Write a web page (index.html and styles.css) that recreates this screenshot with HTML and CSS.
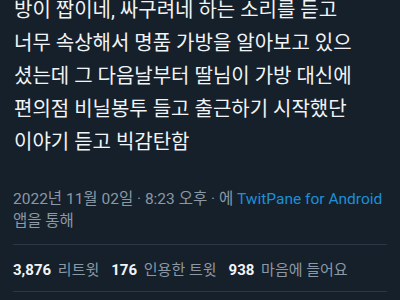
FILE: index.html
```html
<!DOCTYPE html>
<html lang="ko">
<head>
<meta charset="utf-8">
<link rel="stylesheet" href="styles.css">
</head>
<body>
<main class="tweet">
  <p class="text">방이 짭이네, 싸구려네 하는 소리를 듣고<br>너무 속상해서 명품 가방을 알아보고 있으<br>셨는데 그 다음날부터 딸님이 가방 대신에<br>편의점 비닐봉투 들고 출근하기 시작했단<br>이야기 듣고 빅감탄함</p>
  <p class="meta">2022년 11월 02일 · 8:23 오후 · 에 <span class="link">TwitPane for Android</span><br>앱을 통해</p>
  <div class="stats">
    <span class="stat"><b>3,876</b> 리트윗</span>
    <span class="stat"><b>176</b> 인용한 트윗</span>
    <span class="stat"><b>938</b> 마음에 들어요</span>
  </div>
</main>
</body>
</html>
```
FILE: styles.css
```css
html, body {
  margin: 0;
  padding: 0;
  background: #15202b;
  overflow: hidden;
}
body {
  font-family: Roboto, "Noto Sans CJK KR", sans-serif;
  width: 400px;
  height: 300px;
}
.tweet {
  padding: 0 13px 0 14px;
}
.text {
  margin: -6px 0 0 0;
  font-size: 20px;
  line-height: 33px;
  color: #f1f4f6;
  white-space: nowrap;
}
.meta {
  margin: 29px 0 0 -1px;
  font-size: 15.5px;
  line-height: 22px;
  color: #8b98a5;
  white-space: nowrap;
}
.link {
  color: #1d8fd8;
}
.stats {
  margin: 12px 0 0 -1px;
  border-top: 1px solid #2a3744;
  border-bottom: 1px solid #2a3744;
  height: 46px;
  display: flex;
  align-items: center;
  gap: 12px;
  font-size: 15px;
  color: #8b98a5;
}
.stat b {
  color: #f1f4f6;
  font-weight: 700;
  margin-right: 3px;
}
```
